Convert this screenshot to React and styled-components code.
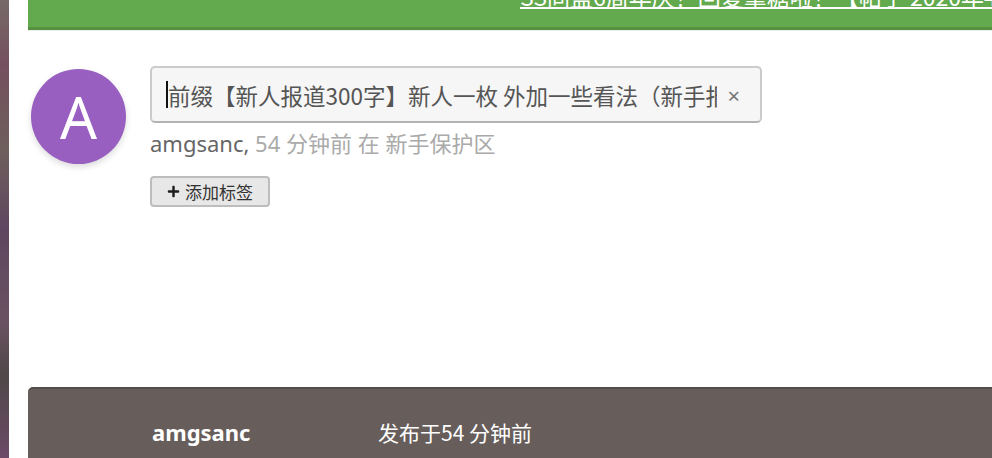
import React from "react";
import styled, { createGlobalStyle } from "styled-components";
import { FaPlus } from "react-icons/fa";

const GlobalStyle = createGlobalStyle`
  html, body {
    margin: 0;
    padding: 0;
    height: 100%;
    overflow: hidden;
    background: #fff;
  }
  body {
    font-family: "Noto Sans", "Noto Sans CJK SC", sans-serif;
  }
`;

const Page = styled.div`
  display: flex;
  min-height: 100vh;
`;

const SideStrip = styled.div`
  width: 9px;
  flex-shrink: 0;
  background: linear-gradient(
    180deg,
    #766a68 0%,
    #74505e 14%,
    #6e5f5c 33%,
    #5e4660 50%,
    #6a5262 70%,
    #4f4848 82%,
    #6c4a68 100%
  );
`;

const Main = styled.main`
  flex: 1;
  min-width: 0;
  padding-left: 19px;
  display: flex;
  flex-direction: column;
`;

const Banner = styled.div`
  height: 27px;
  background: #63a94e;
  border-bottom: 3px solid #55913f;
  box-shadow: 0 1px 0 #ececec;
  overflow: hidden;
  white-space: nowrap;
`;

const BannerLink = styled.a`
  display: block;
  margin: -15px 0 0 492px;
  font-family: "Noto Sans CJK SC", sans-serif;
  font-size: 23px;
  line-height: 23px;
  color: #fff;
  text-decoration: underline;
  text-underline-offset: 1px;
`;

const Header = styled.section`
  display: flex;
  align-items: flex-start;
  gap: 24px;
  padding: 36px 0 0 3px;
`;

const Avatar = styled.div`
  width: 95px;
  height: 95px;
  margin-top: 3px;
  border-radius: 50%;
  background: #985fc1;
  box-shadow: 0 3px 6px rgba(0, 0, 0, 0.14);
  color: #fff;
  font-size: 58px;
  line-height: 95px;
  text-align: center;
  flex-shrink: 0;
`;

const Column = styled.div`
  display: flex;
  flex-direction: column;
  align-items: flex-start;
`;

const TitleBox = styled.div`
  width: 612px;
  height: 57px;
  box-sizing: border-box;
  display: flex;
  align-items: center;
  padding: 0 20px 0 14px;
  background: #f6f6f6;
  border: 2px solid #cbcbcb;
  border-bottom-color: #b3b3b3;
  border-radius: 5px;
`;

const Caret = styled.span`
  width: 2px;
  height: 27px;
  background: #111;
  flex-shrink: 0;
`;

const TitleText = styled.span`
  flex: 1;
  min-width: 0;
  overflow: hidden;
  white-space: nowrap;
  font-family: "Noto Sans CJK SC", sans-serif;
  font-size: 22.5px;
  line-height: 28px;
  color: #555;
`;

const Clear = styled.span`
  margin-left: 10px;
  font-size: 22px;
  line-height: 28px;
  color: #777;
`;

const Meta = styled.div`
  margin-top: 5px;
  font-size: 22px;
  line-height: 30px;
  color: #aaa;
`;

const Author = styled.span`
  color: #666;
`;

const TagButton = styled.button`
  margin-top: 18px;
  width: 120px;
  height: 31px;
  display: flex;
  align-items: center;
  justify-content: center;
  gap: 5px;
  padding: 0;
  background: #e7e7e7;
  border: 2px solid #bdbdbd;
  border-radius: 4px;
  font-family: "Noto Sans", "Noto Sans CJK SC", sans-serif;
  font-size: 17px;
  color: #333;

  svg {
    width: 13px;
    height: 13px;
    color: #1c1c1c;
  }
`;

const PostCard = styled.article`
  margin-top: 180px;
  flex: 1;
  display: flex;
  align-items: flex-start;
  padding: 29px 0 0 124px;
  background: #675e5b;
  border-top: 2px solid #544c4a;
  border-top-left-radius: 5px;
  color: #fff;
  font-size: 21px;
  line-height: 28px;
`;

const PostAuthor = styled.span`
  width: 226px;
  font-size: 22px;
  font-weight: 700;
`;

const PostTime = styled.span`
  font-family: "Noto Sans CJK SC", sans-serif;
`;

export default function App() {
  return (
    <>
      <GlobalStyle />
      <Page>
        <SideStrip />
        <Main>
          <Banner>
            <BannerLink href="#">
              SS同盟6周年庆！回复拿糖啦！【帖于 2020年4月19日】
            </BannerLink>
          </Banner>
          <Header>
            <Avatar>A</Avatar>
            <Column>
              <TitleBox>
                <Caret />
                <TitleText>
                  前缀【新人报道300字】新人一枚 外加一些看法（新手报道，多多关照）
                </TitleText>
                <Clear>×</Clear>
              </TitleBox>
              <Meta>
                <Author>amgsanc,</Author> 54 分钟前 在 新手保护区
              </Meta>
              <TagButton>
                <FaPlus />
                添加标签
              </TagButton>
            </Column>
          </Header>
          <PostCard>
            <PostAuthor>amgsanc</PostAuthor>
            <PostTime>发布于54 分钟前</PostTime>
          </PostCard>
        </Main>
      </Page>
    </>
  );
}
